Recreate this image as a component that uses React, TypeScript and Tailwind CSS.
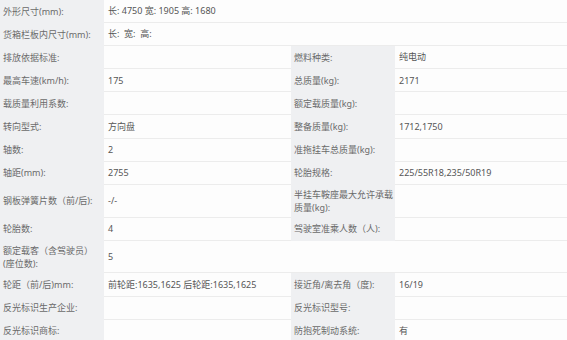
import React from 'react';

type Row = {
    label: string;
    value?: string;
    rLabel?: string;
    rValue?: string;
    full?: boolean;
    tall?: boolean;
    noRight?: boolean;
};

const rows: Row[] = [
    { label: '外形尺寸(mm):', value: '长: 4750 宽: 1905 高: 1680', full: true },
    { label: '货箱栏板内尺寸(mm):', value: '长:  宽:  高:', full: true },
    { label: '排放依据标准:', value: '', rLabel: '燃料种类:', rValue: '纯电动' },
    { label: '最高车速(km/h):', value: '175', rLabel: '总质量(kg):', rValue: '2171' },
    { label: '载质量利用系数:', value: '', rLabel: '额定载质量(kg):', rValue: '' },
    { label: '转向型式:', value: '方向盘', rLabel: '整备质量(kg):', rValue: '1712,1750' },
    { label: '轴数:', value: '2', rLabel: '准拖挂车总质量(kg):', rValue: '' },
    { label: '轴距(mm):', value: '2755', rLabel: '轮胎规格:', rValue: '225/55R18,235/50R19' },
    { label: '钢板弹簧片数（前/后):', value: '-/-', rLabel: '半挂车鞍座最大允许承载质量(kg):', rValue: '', tall: true },
    { label: '轮胎数:', value: '4', rLabel: '驾驶室准乘人数（人):', rValue: '' },
    { label: '额定载客（含驾驶员）(座位数):', value: '5', tall: true, noRight: true },
    { label: '轮距（前/后)mm:', value: '前轮距:1635,1625 后轮距:1635,1625', rLabel: '接近角/离去角（度):', rValue: '16/19' },
    { label: '反光标识生产企业:', value: '', rLabel: '反光标识型号:', rValue: '' },
    { label: '反光标识商标:', value: '', rLabel: '防抱死制动系统:', rValue: '有' },
];

function Label({ text, tall }: { text: string; tall?: boolean }) {
    return (
        <div className={`flex items-center bg-[#eff0f2] pl-[3px] pr-[2px] text-[#6a6a6a] ${tall ? 'h-[32.8px]' : 'h-[23.1px]'}`}>
            <span className="leading-[13.5px]">{text}</span>
        </div>
    );
}

function Value({ text, tall, span }: { text?: string; tall?: boolean; span?: boolean }) {
    return (
        <div className={`flex items-center border-b border-[#ececec] bg-[#fdfdfd] pl-[4px] text-[#555] ${tall ? 'h-[32.8px]' : 'h-[23.1px]'} ${span ? 'col-span-3' : ''}`}>
            <span className="whitespace-pre">{text}</span>
        </div>
    );
}

export default function App() {
    return (
        <div className="w-[567px] h-[340px] overflow-hidden bg-[#fdfdfd] font-['Noto_Sans','Noto_Sans_CJK_SC',sans-serif] text-[9px]">
            <div className="grid grid-cols-[104px_187px_104px_1fr]">
                {rows.map((r, i) => (
                    <React.Fragment key={i}>
                        <Label text={r.label} tall={r.tall} />
                        <Value text={r.value} tall={r.tall} span={r.full} />
                        {!r.full && (r.noRight ? (
                            <div className={`col-span-2 border-b border-[#ececec] ${r.tall ? 'h-[32.8px]' : 'h-[23.1px]'}`} />
                        ) : (
                            <>
                                <Label text={r.rLabel || ''} tall={r.tall} />
                                <Value text={r.rValue} tall={r.tall} />
                            </>
                        ))}
                    </React.Fragment>
                ))}
            </div>
        </div>
    );
}
